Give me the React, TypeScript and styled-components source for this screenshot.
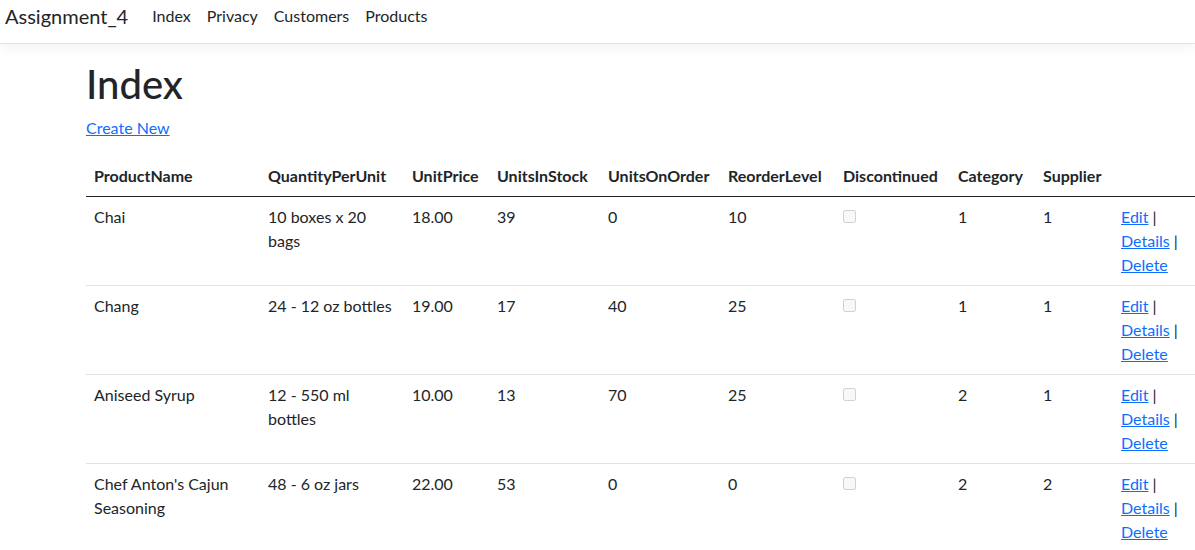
import * as React from 'react';
import styled, { createGlobalStyle } from 'styled-components';

const GlobalStyle = createGlobalStyle`
  html, body {
    margin: 0;
    padding: 0;
    overflow-x: hidden;
    background: #fff;
  }
  body {
    font-family: "Segoe UI", Lato, "Liberation Sans", sans-serif;
    font-size: 16px;
    line-height: 1.5;
    color: #212529;
  }
  *, *::before, *::after {
    box-sizing: border-box;
  }
`;

const palette = {
  text: '#212529',
  link: '#0d6efd',
  border: '#dee2e6',
};

const Navbar = styled.nav`
  display: flex;
  align-items: center;
  height: 44px;
  padding: 0 5px 12px;
  background: #fff;
  border-bottom: 1px solid #e5e5e5;
  box-shadow: 0 0.25rem 0.75rem rgba(0, 0, 0, 0.05);
  margin-bottom: 16px;
`;

const Brand = styled.a`
  font-size: 20px;
  line-height: 30px;
  color: ${palette.text};
  text-decoration: none;
  margin-right: 16px;
`;

const NavList = styled.ul`
  display: flex;
  list-style: none;
  margin: 0;
  padding: 0;
`;

const NavLink = styled.a`
  display: block;
  padding: 0 8px;
  line-height: 24px;
  color: ${palette.text};
  text-decoration: none;
`;

const Main = styled.main`
  padding-left: 86px;
`;

const Title = styled.h1`
  margin: 0 0 8px;
  font-size: 40px;
  font-weight: 500;
  line-height: 1.2;
`;

const Paragraph = styled.p`
  margin: 0 0 16px;
`;

const Link = styled.a`
  color: ${palette.link};
  text-decoration: underline;
`;

const Table = styled.table`
  width: 1117px;
  table-layout: fixed;
  border-collapse: collapse;
  color: ${palette.text};
  vertical-align: top;

  th,
  td {
    padding: 8px;
    text-align: left;
    vertical-align: top;
  }

  th {
    font-weight: 700;
    vertical-align: bottom;
  }

  thead tr {
    border-bottom: 1px solid ${palette.text};
  }

  tbody td {
    border-bottom: 1px solid ${palette.border};
  }
`;

const Check = styled.input`
  margin: 4px 0 0;
  width: 13px;
  height: 13px;
`;

interface Product {
  name: string;
  qty: string;
  price: string;
  stock: number;
  order: number;
  reorder: number;
  category: number;
  supplier: number;
}

const products: Product[] = [
  { name: 'Chai', qty: '10 boxes x 20 bags', price: '18.00', stock: 39, order: 0, reorder: 10, category: 1, supplier: 1 },
  { name: 'Chang', qty: '24 - 12 oz bottles', price: '19.00', stock: 17, order: 40, reorder: 25, category: 1, supplier: 1 },
  { name: 'Aniseed Syrup', qty: '12 - 550 ml bottles', price: '10.00', stock: 13, order: 70, reorder: 25, category: 2, supplier: 1 },
  { name: "Chef Anton's Cajun Seasoning", qty: '48 - 6 oz jars', price: '22.00', stock: 53, order: 0, reorder: 0, category: 2, supplier: 2 },
];

const columns = [
  { label: 'ProductName', width: 174 },
  { label: 'QuantityPerUnit', width: 144 },
  { label: 'UnitPrice', width: 85 },
  { label: 'UnitsInStock', width: 111 },
  { label: 'UnitsOnOrder', width: 120 },
  { label: 'ReorderLevel', width: 115 },
  { label: 'Discontinued', width: 115 },
  { label: 'Category', width: 85 },
  { label: 'Supplier', width: 78 },
  { label: '', width: 90 },
];

const App: React.FC = () => (
  <>
    <GlobalStyle />
    <Navbar>
      <Brand href="#">Assignment_4</Brand>
      <NavList>
        {['Index', 'Privacy', 'Customers', 'Products'].map((item) => (
          <li key={item}>
            <NavLink href="#">{item}</NavLink>
          </li>
        ))}
      </NavList>
    </Navbar>
    <Main>
      <Title>Index</Title>
      <Paragraph>
        <Link href="#">Create New</Link>
      </Paragraph>
      <Table>
        <colgroup>
          {columns.map((c, i) => (
            <col key={i} style={{ width: c.width }} />
          ))}
        </colgroup>
        <thead>
          <tr>
            {columns.map((c, i) => (
              <th key={i}>{c.label}</th>
            ))}
          </tr>
        </thead>
        <tbody>
          {products.map((p) => (
            <tr key={p.name}>
              <td>{p.name}</td>
              <td>{p.qty}</td>
              <td>{p.price}</td>
              <td>{p.stock}</td>
              <td>{p.order}</td>
              <td>{p.reorder}</td>
              <td>
                <Check type="checkbox" disabled />
              </td>
              <td>{p.category}</td>
              <td>{p.supplier}</td>
              <td>
                <Link href="#">Edit</Link> | <Link href="#">Details</Link> |{' '}
                <Link href="#">Delete</Link>
              </td>
            </tr>
          ))}
        </tbody>
      </Table>
    </Main>
  </>
);

export default App;
